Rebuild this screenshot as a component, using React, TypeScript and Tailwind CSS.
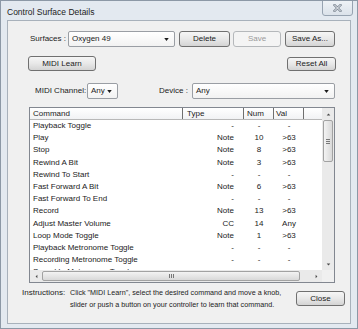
const rows: [string, string, string, string][] = [
  ['Playback Toggle', '-', '-', '-'],
  ['Play', 'Note', '10', '>63'],
  ['Stop', 'Note', '8', '>63'],
  ['Rewind A Bit', 'Note', '3', '>63'],
  ['Rewind To Start', '-', '-', '-'],
  ['Fast Forward A Bit', 'Note', '6', '>63'],
  ['Fast Forward To End', '-', '-', '-'],
  ['Record', 'Note', '13', '>63'],
  ['Adjust Master Volume', 'CC', '14', 'Any'],
  ['Loop Mode Toggle', 'Note', '1', '>63'],
  ['Playback Metronome Toggle', '-', '-', '-'],
  ['Recording Metronome Toggle', '-', '-', '-'],
  ['Sound In Metronome Toggle', '-', '-', '-'],
];

function Btn({ label, w, h = 'h-[16px]', disabled = false }: { label: string; w: string; h?: string; disabled?: boolean }) {
  return (
    <div
      className={`${w} ${h} flex items-center justify-center rounded-[3px] border ${
        disabled
          ? 'border-[#b5b8bb] bg-[#f4f4f4] text-[#9a9a9a]'
          : 'border-[#707070] bg-linear-to-b from-[#f6f6f6] via-[#e8e8e8] to-[#d4d4d4] text-[#1b1b1b]'
      }`}
    >
      {label}
    </div>
  );
}

function Arrow({ dir }: { dir: 'up' | 'down' | 'left' | 'right' }) {
  const pts = {
    up: '1,4 4,1 7,4',
    down: '1,1 4,4 7,1',
    left: '4,1 1,4 4,7',
    right: '1,1 4,4 1,7',
  }[dir];
  const box = dir === 'up' || dir === 'down' ? '0 0 8 5' : '0 0 5 8';
  return (
    <svg viewBox={box} className={dir === 'up' || dir === 'down' ? 'w-[5px] h-[3px]' : 'w-[3px] h-[5px]'}>
      <polygon points={pts} fill="#4a4a4a" />
    </svg>
  );
}

function Select({ value, w }: { value: string; w: string }) {
  return (
    <div className={`${w} h-[16px] flex items-center justify-between rounded-[2px] border border-[#9a9ea4] bg-linear-to-b from-white to-[#f2f2f2] pl-[3px] pr-[5px]`}>
      <span>{value}</span>
      <svg viewBox="0 0 6 4" className="w-[5px] h-[3px]">
        <polygon points="0,0 6,0 3,4" fill="#1b1b1b" />
      </svg>
    </div>
  );
}

export default function App() {
  return (
    <div className="w-[358px] h-[329px] overflow-hidden border border-[#8c98a6] bg-[#e3e9f0] flex flex-col font-['Liberation_Sans',Arial,sans-serif] text-[8px] text-[#1b1b1b]">
      {/* Title bar */}
      <div className="h-[19px] flex items-start justify-between pl-[6px] pr-[4px]">
        <span className="mt-[5px] text-[8.5px] text-[#222]">Control Surface Details</span>
        <div className="w-[31px] h-[16px] -mt-px flex items-center justify-center rounded-b-[3px] border border-[#97a3b1] bg-linear-to-b from-[#eef2f6] to-[#dbe2ea]">
          <svg viewBox="0 0 10 9" className="w-[9px] h-[8px]">
            <path d="M1.5 1 L8.5 8 M8.5 1 L1.5 8" stroke="#7d8794" strokeWidth="2.6" strokeLinecap="square" />
            <path d="M1.5 1 L8.5 8 M8.5 1 L1.5 8" stroke="#f4f6f8" strokeWidth="1.1" strokeLinecap="square" />
          </svg>
        </div>
      </div>

      {/* Dialog body */}
      <div className="ml-[6px] w-[344px] h-[304px] border border-[#a8b1bb] bg-[#f0f0f0] flex flex-col">
        <div className="mt-[10px] h-[16px] flex items-center pl-[21px]">
          <span className="w-[37px] text-right whitespace-nowrap">Surfaces :</span>
          <div className="ml-[2px]">
            <Select value="Oxygen 49" w="w-[107px]" />
          </div>
          <div className="ml-[4px]"><Btn label="Delete" w="w-[51px]" /></div>
          <div className="ml-[3px]"><Btn label="Save" w="w-[48px]" disabled /></div>
          <div className="ml-[4px]"><Btn label="Save As..." w="w-[50px]" /></div>
        </div>

        <div className="mt-[9px] h-[15px] flex items-end justify-between pl-[20px] pr-[14px]">
          <Btn label="MIDI Learn" w="w-[68px]" h="h-[15px]" />
          <Btn label="Reset All" w="w-[49px]" h="h-[14px]" />
        </div>

        <div className="mt-[12px] h-[16px] flex items-center pl-[27px]">
          <span className="w-[52px] whitespace-nowrap">MIDI Channel:</span>
          <Select value="Any" w="w-[31px]" />
          <span className="ml-[41px] w-[33px] whitespace-nowrap">Device :</span>
          <Select value="Any" w="w-[143px]" />
        </div>

        {/* Command list */}
        <div className="mt-[8px] ml-[21px] w-[306px] h-[176px] border border-[#828790] bg-white flex flex-col">
          <div className="h-[162px] flex">
            <div className="w-[292px] flex flex-col overflow-hidden">
              <div className="h-[12px] shrink-0 flex border-b border-[#b8b8b8] bg-linear-to-b from-white to-[#f1f2f4]">
                <div className="w-[153px] pl-[3px] flex items-center border-r border-[#6f6f6f]">Command</div>
                <div className="w-[61px] pl-[4px] flex items-center border-r border-[#6f6f6f]">Type</div>
                <div className="w-[30px] pl-[3px] flex items-center border-r border-[#6f6f6f]">Num</div>
                <div className="w-[30px] pl-[2px] flex items-center border-r border-[#6f6f6f]">Val</div>
                <div className="flex-1" />
              </div>
              {rows.map(([cmd, type, num, val]) => (
                <div key={cmd} className="h-[12.2px] shrink-0 flex items-center">
                  <div className="w-[153px] pl-[3px] whitespace-nowrap">{cmd}</div>
                  <div className="w-[61px] pr-[10px] text-right">{type}</div>
                  <div className="w-[30px] text-center">{num}</div>
                  <div className="w-[30px] text-center">{val}</div>
                </div>
              ))}
            </div>
            {/* vertical scrollbar */}
            <div className="w-[12px] flex flex-col bg-[#eaeaea]">
              <div className="h-[12px] flex items-center justify-center"><Arrow dir="up" /></div>
              <div className="h-[42px] mx-px flex items-center justify-center rounded-[2px] border border-[#a2a2a2] bg-linear-to-r from-[#f3f3f3] to-[#d9d9d9]">
                <div className="flex flex-col gap-px">
                  <div className="w-[4px] h-px bg-[#777]" />
                  <div className="w-[4px] h-px bg-[#777]" />
                  <div className="w-[4px] h-px bg-[#777]" />
                </div>
              </div>
              <div className="flex-1" />
              <div className="h-[12px] flex items-center justify-center"><Arrow dir="down" /></div>
            </div>
          </div>
          {/* horizontal scrollbar */}
          <div className="h-[12px] flex bg-[#eaeaea]">
            <div className="w-[12px] flex items-center justify-center"><Arrow dir="left" /></div>
            <div className="w-[258px] my-px flex items-center justify-center rounded-[2px] border border-[#a2a2a2] bg-linear-to-b from-[#f3f3f3] to-[#d9d9d9]">
              <div className="flex gap-px">
                <div className="w-px h-[4px] bg-[#777]" />
                <div className="w-px h-[4px] bg-[#777]" />
                <div className="w-px h-[4px] bg-[#777]" />
              </div>
            </div>
            <div className="flex-1" />
            <div className="w-[12px] flex items-center justify-center"><Arrow dir="right" /></div>
            <div className="w-[12px] bg-[#f0f0f0]" />
          </div>
        </div>

        {/* Instructions */}
        <div className="mt-[4px] flex pl-[14px] pr-[5px]">
          <span className="w-[48px] shrink-0 leading-[12px] whitespace-nowrap">Instructions:</span>
          <p className="leading-[12px] whitespace-nowrap text-[7.2px]">
            Click "MIDI Learn", select the desired command and move a knob,
            <br />
            slider or push a button on your controller to learn that command.
          </p>
          <div className="ml-auto mt-[4px] shrink-0">
            <Btn label="Close" w="w-[49px]" h="h-[15px]" />
          </div>
        </div>
      </div>
    </div>
  );
}
